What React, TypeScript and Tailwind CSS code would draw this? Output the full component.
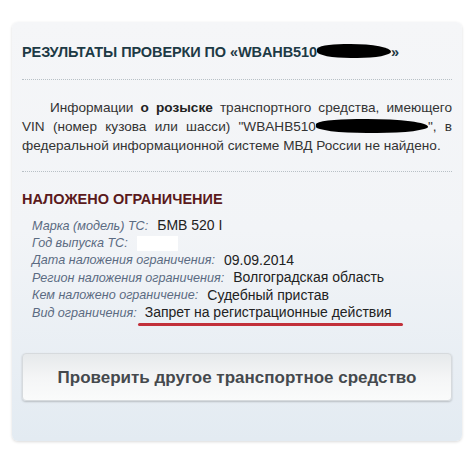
const rows: { label: string; value: string }[] = [
  { label: 'Марка (модель) ТС:', value: 'БМВ 520 I' },
  { label: 'Год выпуска ТС:', value: '' },
  { label: 'Дата наложения ограничения:', value: '09.09.2014' },
  { label: 'Регион наложения ограничения:', value: 'Волгоградская область' },
  { label: 'Кем наложено ограничение:', value: 'Судебный пристав' },
  { label: 'Вид ограничения:', value: 'Запрет на регистрационные действия' },
];

function Blot({ className }: { className: string }) {
  return <span className={`inline-block align-middle bg-black rounded-[40%_60%_50%_50%] ${className}`} />;
}

export default function App() {
  return (
    <div className="min-h-screen bg-white px-3 pt-[22px] pb-3 font-['Liberation_Sans',Arial,sans-serif]">
      <div className="rounded-md bg-gradient-to-b from-[#f5f6f8] via-[#f2f4f7] to-[#e3ebf2] shadow-[0_1px_3px_rgba(0,0,0,0.15)] px-[10px] pt-[20px] pb-[40px]">
        <h2 className="text-[14.5px] font-bold text-[#1d3a45] leading-5 tracking-[-0.1px]">
          РЕЗУЛЬТАТЫ ПРОВЕРКИ ПО «WBAHB510
          <Blot className="w-[74px] h-[14px] -mt-1" />»
        </h2>
        <div className="mt-[17px] border-t border-dotted border-[#b8c0c6]" />
        <p className="mt-[18px] text-[13.6px] leading-[19px] text-[#333] text-justify indent-[28px]">
          Информации <b className="text-[#222]">о розыске</b> транспортного средства, имеющего VIN (номер кузова или шасси) "WBAHB510
          <Blot className="w-[112px] h-[14px] -mt-0.5" />", в федеральной информационной системе МВД России не найдено.
        </p>
        <div className="mt-[16px] border-t border-dotted border-[#b8c0c6]" />
        <h3 className="mt-[17px] text-[14.5px] font-bold text-[#5a1a1c] leading-5">НАЛОЖЕНО ОГРАНИЧЕНИЕ</h3>
        <div className="mt-[8px] pl-[10px]">
          {rows.map((r) => (
            <div key={r.label} className="flex items-center h-[17.4px] leading-[17px]">
              <span className="italic text-[12.6px] text-[#5b6b82] pt-[1px]">{r.label}</span>
              {r.label === 'Год выпуска ТС:' ? (
                <span className="ml-[9px] inline-block w-[41px] h-[15px] bg-white" />
              ) : r.label === 'Вид ограничения:' ? (
                <span className="relative ml-[8px] text-[14px] text-[#222]">
                  {r.value}
                  <span className="absolute left-[-7px] right-[-11px] bottom-[-5px] h-[3px] rounded-full bg-[#c2303a]" />
                </span>
              ) : (
                <span className="ml-[9px] text-[14px] text-[#222]">{r.value}</span>
              )}
            </div>
          ))}
        </div>
        <button className="mt-[32px] w-full h-[48px] rounded-sm bg-gradient-to-b from-[#e6e9eb] via-[#f4f5f6] to-[#fafbfb] border border-[#d6dadd] shadow-[0_1px_2px_rgba(0,0,0,0.2)] text-[17px] font-bold text-[#45494d]">
          Проверить другое транспортное средство
        </button>
      </div>
    </div>
  );
}
